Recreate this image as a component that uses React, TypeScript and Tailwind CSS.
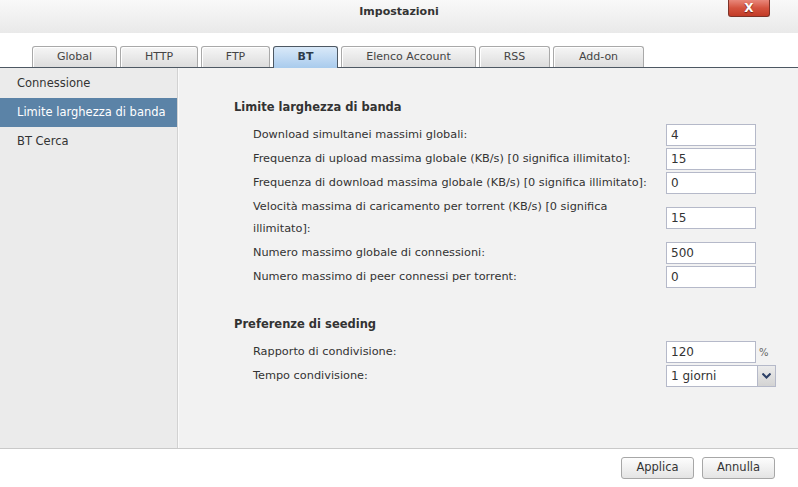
import React from 'react';

const tabs = [
  { label: 'Global', w: 85 },
  { label: 'HTTP', w: 78 },
  { label: 'FTP', w: 69 },
  { label: 'BT', w: 65, active: true },
  { label: 'Elenco Account', w: 135 },
  { label: 'RSS', w: 71 },
  { label: 'Add-on', w: 91 },
];

const menu = ['Connessione', 'Limite larghezza di banda', 'BT Cerca'];

function Field({ value }: { value: string }) {
  return (
    <div className="w-[90px] h-[22px] bg-white border border-[#b5b9c9] pl-[4px] text-[12px] leading-[20px] text-[#333]">
      {value}
    </div>
  );
}

function Row({ label, value, tall }: { label: React.ReactNode; value: string; tall?: boolean }) {
  return (
    <div className="flex items-center">
      <div className={'w-[432px] pl-[19px] leading-[22px] ' + (tall ? '' : 'whitespace-nowrap')}>{label}</div>
      <Field value={value} />
    </div>
  );
}

export default function App() {
  return (
    <div className="w-[798px] h-[487px] bg-white flex flex-col text-[11.3px] text-[#333] overflow-hidden" style={{ fontFamily: '"DejaVu Sans", Verdana, sans-serif' }}>
      {/* title bar */}
      <div className="relative h-[33px] shrink-0 bg-gradient-to-b from-[#f9f9f9] to-[#e9e9e9] flex items-center justify-center">
        <span className="font-bold text-[11px] text-[#333] -mt-[9px]">Impostazioni</span>
        <div className="absolute left-[728px] top-0 w-[42px] h-[17px] rounded-b-[3px] border border-t-0 border-[#7d3328] bg-gradient-to-b from-[#e8877a] via-[#d4533f] to-[#c23b27] flex items-center justify-center">
          <span className="text-white font-bold text-[12px] leading-none [text-shadow:0_1px_1px_#6b1d12]">X</span>
        </div>
      </div>

      {/* tabs */}
      <div className="h-[35px] shrink-0 flex items-end pl-[32px] gap-[3px] border-b border-[#4d5863] text-[11px]">
        {tabs.map((t) => (
          <div
            key={t.label}
            style={{ width: t.w }}
            className={
              'h-[21px] rounded-t-[3px] flex items-center justify-center ' +
              (t.active
                ? 'border border-b-0 border-[#4d5863] bg-gradient-to-b from-[#d9e9f8] to-[#a9cbed] font-bold text-[#2d3b4a] -mb-px h-[22px]'
                : 'border border-b-0 border-[#a9a9a9] bg-gradient-to-b from-[#f6f6f6] to-[#dddddd] shadow-[inset_1px_1px_0_#ffffff] text-[#444]')
            }
          >
            {t.label}
          </div>
        ))}
      </div>

      {/* body */}
      <div className="flex flex-1 min-h-0">
        <div className="w-[178px] shrink-0 bg-[#ebebeb] border-r border-[#d2d2d2] text-[11.5px] pt-[1px]">
          {menu.map((m, i) => (
            <div
              key={m}
              className={
                'h-[29px] flex items-center pl-[17px] ' + (i === 1 ? 'bg-[#5b83a7] text-white' : 'text-[#333]')
              }
            >
              {m}
            </div>
          ))}
        </div>
        <div className="flex-1 bg-[#f2f2f2] border-l border-[#fafafa] pl-[55px] pt-[31px]">
          <div className="font-bold text-[11.5px] leading-[16px]">Limite larghezza di banda</div>
          <div className="mt-[9px] flex flex-col gap-[2px]">
            <Row label="Download simultanei massimi globali:" value="4" />
            <Row label="Frequenza di upload massima globale (KB/s) [0 significa illimitato]:" value="15" />
            <Row label="Frequenza di download massima globale (KB/s) [0 significa illimitato]:" value="0" />
            <Row
              tall
              label={
                <>
                  Velocità massima di caricamento per torrent (KB/s) [0 significa
                  <br />
                  illimitato]:
                </>
              }
              value="15"
            />
            <Row label="Numero massimo globale di connessioni:" value="500" />
            <Row label="Numero massimo di peer connessi per torrent:" value="0" />
          </div>

          <div className="mt-[28px] font-bold text-[11.5px] leading-[16px]">Preferenze di seeding</div>
          <div className="mt-[9px] flex flex-col gap-[2px]">
            <div className="flex items-center">
              <div className="w-[432px] pl-[19px] leading-[22px]">Rapporto di condivisione:</div>
              <Field value="120" />
              <span className="ml-[3px] text-[10px] text-[#666]">%</span>
            </div>
            <div className="flex items-center">
              <div className="w-[432px] pl-[19px] leading-[22px]">Tempo condivisione:</div>
              <div className="w-[110px] h-[22px] bg-white border border-[#b5b9c9] flex text-[12px] leading-[20px]">
                <span className="flex-1 pl-[4px]">1 giorni</span>
                <div className="w-[18px] border-l border-[#b5b9c9] bg-gradient-to-b from-[#ececec] to-[#d3d3d3] flex items-center justify-center">
                  <svg width="9" height="6" viewBox="0 0 9 6">
                    <path d="M0.5 0.5 L4.5 4.5 L8.5 0.5" fill="none" stroke="#2b3f66" strokeWidth="2" />
                  </svg>
                </div>
              </div>
            </div>
          </div>
        </div>
      </div>

      {/* footer */}
      <div className="h-[39px] shrink-0 border-t border-[#c9c9c9] bg-white flex items-start justify-end pt-[8px] pr-[23px] gap-[8px]">
        {['Applica', 'Annulla'].map((b) => (
          <div
            key={b}
            className="w-[73px] h-[22px] rounded-[3px] border border-[#a7a7a7] bg-gradient-to-b from-[#fdfdfd] to-[#e4e4e4] flex items-center justify-center text-[11.5px] text-[#333]"
          >
            {b}
          </div>
        ))}
      </div>
    </div>
  );
}
